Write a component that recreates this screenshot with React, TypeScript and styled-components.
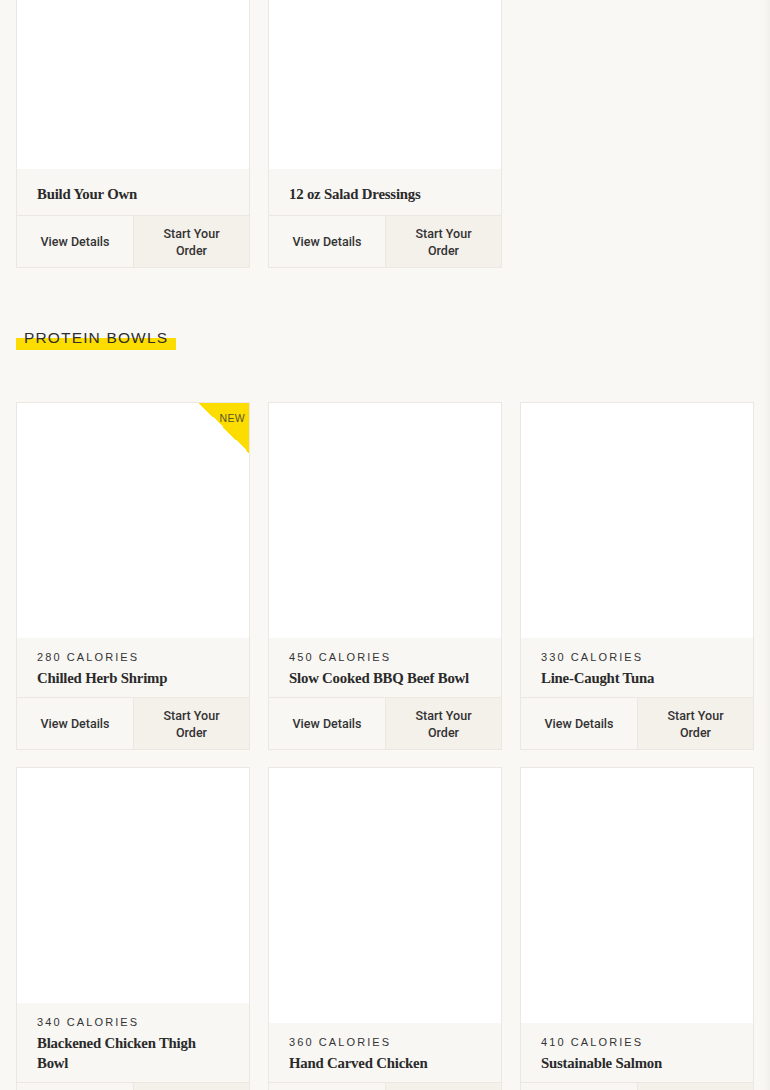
import styled, { createGlobalStyle } from "styled-components";

const GlobalStyle = createGlobalStyle`
  html, body {
    margin: 0;
    padding: 0;
    background: #f9f8f5;
  }
  body {
    font-family: "Liberation Sans", Arial, sans-serif;
    color: #2b2b2b;
    overflow: hidden;
  }
`;

const Page = styled.div`
  position: relative;
  width: 770px;
  min-height: 1090px;
  padding: 0 16px 40px;
  box-sizing: border-box;
  box-shadow: inset -8px 0 8px -6px rgba(0, 0, 0, 0.05);
`;

const Grid = styled.div<{ $offset?: number }>`
  display: grid;
  grid-template-columns: repeat(3, 1fr);
  column-gap: 18px;
  row-gap: 17px;
  margin-top: ${(p) => p.$offset ?? 0}px;
`;

const Card = styled.div`
  position: relative;
  display: flex;
  flex-direction: column;
  background: #fff;
  border: 1px solid #ebe8e2;
  overflow: hidden;
`;

const ImageArea = styled.div`
  flex: 1;
  min-height: 235px;
  background: #fff;
`;

const Info = styled.div`
  display: flex;
  flex-direction: column;
  justify-content: center;
  min-height: 46px;
  box-sizing: border-box;
  padding: 12px 20px 9px;
  background: #f8f7f4;
`;

const Calories = styled.div`
  font-family: "Liberation Sans", Arial, sans-serif;
  font-size: 11px;
  line-height: 14px;
  letter-spacing: 2.1px;
  color: #333;
  margin-bottom: 4px;
`;

const Name = styled.div`
  font-family: "Liberation Serif", "Times New Roman", serif;
  font-weight: bold;
  font-size: 14.8px;
  line-height: 20px;
  color: #2a2a2a;
  letter-spacing: -0.2px;
`;

const Actions = styled.div`
  display: grid;
  grid-template-columns: 1fr 1fr;
  height: 51px;
  border-top: 1px solid #ebe8e2;
`;

const ActionButton = styled.button<{ $primary?: boolean }>`
  border: none;
  border-left: ${(p) => (p.$primary ? "1px solid #ebe8e2" : "none")};
  margin: 0;
  padding: 0 22px;
  background: ${(p) => (p.$primary ? "#f4f0ea" : "#f8f7f4")};
  font-family: Roboto, "Liberation Sans", Arial, sans-serif;
  font-weight: 500;
  font-size: 12.5px;
  line-height: 17px;
  color: #333;
  text-align: center;
  cursor: pointer;
`;

const NewBadge = styled.div`
  position: absolute;
  top: 0;
  right: 0;
  width: 50px;
  height: 50px;
  background: linear-gradient(to bottom left, #fddc00 50%, transparent 50%);
`;

const BadgeText = styled.span`
  position: absolute;
  top: 9px;
  right: 4px;
  font-family: "Liberation Sans", Arial, sans-serif;
  font-size: 10.5px;
  letter-spacing: 0.3px;
  color: #5a5530;
`;

const SectionHeading = styled.h2`
  margin: 55px 0 52px;
  padding: 0;
  font-weight: normal;
  line-height: 24px;
`;

const HeadingText = styled.span`
  display: inline-block;
  padding: 0 8px;
  font-family: "Liberation Sans", Arial, sans-serif;
  font-size: 15.5px;
  line-height: 24px;
  letter-spacing: 1.15px;
  color: #2e2e2e;
  background: linear-gradient(transparent 12px, #fddc00 12px, #fddc00 24px);
`;

type Item = { name: string; calories?: number; isNew?: boolean };

const topItems: Item[] = [
  { name: "Build Your Own" },
  { name: "12 oz Salad Dressings" },
];

const bowls: Item[] = [
  { name: "Chilled Herb Shrimp", calories: 280, isNew: true },
  { name: "Slow Cooked BBQ Beef Bowl", calories: 450 },
  { name: "Line-Caught Tuna", calories: 330 },
  { name: "Blackened Chicken Thigh Bowl", calories: 340 },
  { name: "Hand Carved Chicken", calories: 360 },
  { name: "Sustainable Salmon", calories: 410 },
];

function MenuCard({ item }: { item: Item }) {
  return (
    <Card>
      {item.isNew && (
        <NewBadge>
          <BadgeText>NEW</BadgeText>
        </NewBadge>
      )}
      <ImageArea />
      <Info>
        {item.calories !== undefined && <Calories>{item.calories} CALORIES</Calories>}
        <Name>{item.name}</Name>
      </Info>
      <Actions>
        <ActionButton>View Details</ActionButton>
        <ActionButton $primary>Start Your Order</ActionButton>
      </Actions>
    </Card>
  );
}

export default function App() {
  return (
    <>
      <GlobalStyle />
      <Page>
        <Grid $offset={-67}>
          {topItems.map((item) => (
            <MenuCard key={item.name} item={item} />
          ))}
        </Grid>
        <SectionHeading>
          <HeadingText>PROTEIN BOWLS</HeadingText>
        </SectionHeading>
        <Grid>
          {bowls.map((item) => (
            <MenuCard key={item.name} item={item} />
          ))}
        </Grid>
      </Page>
    </>
  );
}
